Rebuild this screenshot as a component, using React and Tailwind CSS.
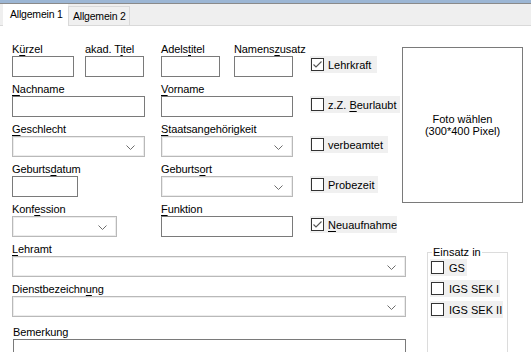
import React from "react";

const F = { fontFamily: '"Liberation Sans", Arial, sans-serif' };

function Label({ children, className = "" }) {
  return (
    <div className={"h-[14px] text-[11px] leading-[14px] text-black whitespace-nowrap tracking-[-0.1px] " + className}>
      {children}
    </div>
  );
}

function U({ children }) {
  return <span className="underline underline-offset-[2px]">{children}</span>;
}

function Input({ className = "" }) {
  return <div className={"h-[21px] border border-[#7a7a7a] bg-white " + className} />;
}

function Chevron() {
  return (
    <svg width="9" height="5" viewBox="0 0 9 5" className="absolute right-[9px] top-[8px]">
      <polyline points="0.5,0.5 4.5,4.5 8.5,0.5" fill="none" stroke="#6d6d6d" strokeWidth="1" />
    </svg>
  );
}

function Select({ className = "" }) {
  return (
    <div className={"relative h-[21px] border border-[#b9b9b9] bg-white shadow-[inset_0_0_0_1px_#ececec] " + className}>
      <Chevron />
    </div>
  );
}

function Box({ checked }) {
  return (
    <div className="relative w-[13px] h-[13px] border border-[#333333] bg-white shrink-0">
      {checked && (
        <svg width="11" height="11" viewBox="0 0 11 11" className="absolute left-0 top-0">
          <polyline points="1.5,5.5 4,8 9.5,2.5" fill="none" stroke="#555555" strokeWidth="1.1" />
        </svg>
      )}
    </div>
  );
}

function Check({ checked, children, className = "" }) {
  return (
    <div className={"flex items-center h-[17px] bg-[#f0f0f0] pl-px gap-[4px] text-[11px] text-black whitespace-nowrap " + className}>
      <Box checked={checked} />
      <span className="leading-[14px]">{children}</span>
    </div>
  );
}

function GCheck({ children, className = "" }) {
  return (
    <div className={"flex items-center h-[17px] bg-[#f0f0f0] pl-px gap-[5px] text-[11px] text-black whitespace-nowrap " + className}>
      <Box />
      <span className="leading-[14px]">{children}</span>
    </div>
  );
}

export default function App() {
  return (
    <div style={F} className="w-[531px] h-[352px] overflow-hidden bg-white relative">
      <div className="h-[3px] bg-[#9cb6d4]" />
      <div className="h-px bg-[#8a8a8a]" />
      <div className="h-[22px] bg-[#efefef] border-b border-[#d9d9d9] flex items-end pl-[3px]">
        <div className="w-[65px] h-[22px] -mb-px bg-white flex items-center pl-[7px] text-[10.5px] tracking-[-0.2px] text-black whitespace-nowrap">
          Allgemein 1
        </div>
        <div className="w-[62px] h-[19px] bg-[#f0f0f0] border border-b-0 border-[#d9d9d9] flex items-center pl-[4px] pt-px text-[10.5px] tracking-[-0.2px] text-black whitespace-nowrap overflow-hidden">
          Allgemein 2
        </div>
      </div>

      {/* top section */}
      <div className="flex pl-[12px] pt-[16px]">
        <div className="flex flex-col w-[281px]">
          <div className="flex mb-[5px]">
            <div className="w-[62px]">
              <Label>K<U>ü</U>rzel</Label>
              <Input />
            </div>
            <div className="w-[59px] ml-[11px]">
              <Label>akad. T<U>i</U>tel</Label>
              <Input />
            </div>
            <div className="w-[59px] ml-[17px]">
              <Label>Adels<U>t</U>itel</Label>
              <Input />
            </div>
            <div className="w-[59px] ml-[14px]">
              <Label>Namens<U>z</U>usatz</Label>
              <Input />
            </div>
          </div>
          <div className="flex mb-[5px]">
            <div className="w-[149px]">
              <Label><U>N</U>achname</Label>
              <Input className="w-[133px]" />
            </div>
            <div className="w-[132px]">
              <Label><U>V</U>orname</Label>
              <Input />
            </div>
          </div>
          <div className="flex mb-[5px]">
            <div className="w-[149px]">
              <Label><U>G</U>eschlecht</Label>
              <Select className="w-[133px]" />
            </div>
            <div className="w-[132px]">
              <Label><U>S</U>taatsangehörigkeit</Label>
              <Select />
            </div>
          </div>
          <div className="flex mb-[5px]">
            <div className="w-[149px]">
              <Label>Geburts<U>d</U>atum</Label>
              <Input className="w-[66px]" />
            </div>
            <div className="w-[132px]">
              <Label>Geburts<U>o</U>rt</Label>
              <Select />
            </div>
          </div>
          <div className="flex mb-[5px]">
            <div className="w-[149px]">
              <Label>Konf<U>e</U>ssion</Label>
              <Select className="w-[105px]" />
            </div>
            <div className="w-[132px]">
              <Label><U>F</U>unktion</Label>
              <Input />
            </div>
          </div>
        </div>

        <div className="flex flex-col ml-[17px] w-[92px] pt-[14px] gap-[23px]">
          <Check checked className="w-[67px]">Lehrkraft</Check>
          <Check className="w-[90px]">z.Z. <U>B</U>eurlaubt</Check>
          <Check className="w-[78px]">verbeamtet</Check>
          <Check className="w-[68px]">Probezeit</Check>
          <Check checked className="w-[87px]"><U>N</U>euaufnahme</Check>
        </div>

        <div className="w-[121px] h-[156px] mt-[5px] border border-[#7a7a7a] flex flex-col items-center justify-center text-[11px] leading-[12px] text-black">
          <div>Foto wählen</div>
          <div>(300*400 Pixel)</div>
        </div>
      </div>

      {/* bottom section */}
      <div className="flex pl-[12px]">
        <div className="flex flex-col w-[394px]">
          <div className="mb-[5px]">
            <Label><U>L</U>ehramt</Label>
            <Select />
          </div>
          <div className="mb-[5px]">
            <Label>Dienstbezeichn<U>u</U>ng</Label>
            <Select />
          </div>
          <div className="mt-[3px] ml-px">
            <Label>Bemerkung</Label>
            <Input className="h-[40px]" />
          </div>
        </div>
        <div className="relative ml-[21px] mt-[10px] w-[81px] h-[120px] border border-[#dcdcdc]">
          <div className="absolute left-[4px] top-[-8px] bg-white px-px text-[11px] leading-[14px] text-black">
            Einsatz in
          </div>
          <div className="flex flex-col pt-[6px] pl-[2px] gap-[4px]">
            <GCheck className="w-[37px]">GS</GCheck>
            <GCheck className="w-[70px]">IGS SEK I</GCheck>
            <GCheck className="w-[73px]">IGS SEK II</GCheck>
          </div>
        </div>
      </div>
    </div>
  );
}
